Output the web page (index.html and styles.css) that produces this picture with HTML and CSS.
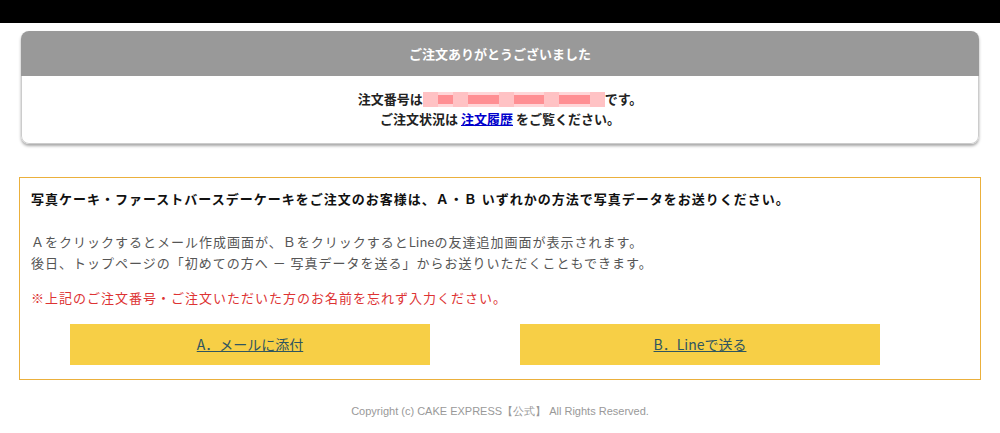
FILE: index.html
```html
<!DOCTYPE html>
<html lang="ja">
<head>
    <meta charset="utf-8">
    <title>ご注文ありがとうございました | CAKE EXPRESS</title>
    <link rel="stylesheet" href="styles.css">
</head>
<body>
    <div class="topbar"></div>

    <div class="container">
        <div class="thanks-card">
            <div class="thanks-head">ご注文ありがとうございました</div>
            <div class="thanks-body">
                <p>注文番号は<span class="masked"><i></i><i class="d"></i><i></i><i class="d"></i><i class="d"></i><i></i><i class="d"></i><i class="d"></i><i></i><i class="d"></i><i class="d"></i><i></i></span>です。</p>
                <p>ご注文状況は <a href="#">注文履歴</a> をご覧ください。</p>
            </div>
        </div>

        <div class="photo-box">
            <p class="photo-title">写真ケーキ・ファーストバースデーケーキをご注文のお客様は、Ａ・Ｂ いずれかの方法で写真データをお送りください。</p>
            <p class="photo-text">Ａをクリックするとメール作成画面が、Ｂをクリックすると<span class="latin">Line</span>の友達追加画面が表示されます。<br>
            後日、トップページの「初めての方へ － 写真データを送る」からお送りいただくこともできます。</p>
            <p class="photo-note">※上記のご注文番号・ご注文いただいた方のお名前を忘れず入力ください。</p>
            <div class="send-buttons">
                <a class="send-btn" href="#">A．メールに添付</a>
                <a class="send-btn" href="#">B．Lineで送る</a>
            </div>
        </div>
    </div>

    <footer class="copyright">Copyright (c) CAKE EXPRESS【公式】 All Rights Reserved.</footer>
</body>
</html>
```

FILE: styles.css
```css
body {
    margin: 0;
    font-family: "Noto Sans CJK JP", "Liberation Sans", sans-serif;
    color: #333;
    background-color: #fff;
}
p {
    margin: 0;
}
.topbar {
    height: 23px;
    background-color: #000;
}
.container {
    width: 960px;
    margin: 0 auto;
    padding-top: 8px;
}
.thanks-card {
    margin: 0 1px;
    border-radius: 8px;
    background-color: #fff;
    box-shadow: 0 2px 3px rgba(0,0,0,0.35);
    overflow: hidden;
}
.thanks-head {
    height: 45px;
    line-height: 45px;
    background-color: #999;
    color: #fff;
    font-size: 13px;
    font-weight: bold;
    text-align: center;
}
.thanks-body {
    padding: 13px 0 14px;
    border: 1px solid #ccc;
    border-top: none;
    border-radius: 0 0 8px 8px;
    text-align: center;
    font-size: 13px;
    font-weight: bold;
    line-height: 20px;
    color: #222;
}
.thanks-body a {
    color: #0000cc;
    text-decoration: underline;
}
.masked {
    display: inline-flex;
    vertical-align: -3px;
    width: 182px;
    height: 15px;
    background-color: #ffd6d8;
}
.masked i {
    flex: 1;
    background-color: #ffc2c4;
}
.masked i.d {
    background-color: #ff8f93;
    margin: 3px 0;
}
.photo-box {
    margin-top: 33px;
    margin-left: -1px;
    margin-right: -1px;
    border: 1px solid #ebb03c;
    padding: 11px 11px 14px;
    font-size: 13px;
    letter-spacing: 1px;
}
.photo-title {
    font-weight: bold;
    color: #111;
    line-height: 20px;
}
.photo-text {
    margin-top: 22px;
    line-height: 21px;
    color: #555;
}
.latin {
    letter-spacing: 0;
}
.photo-note {
    margin-top: 14px;
    line-height: 21px;
    color: #d33;
}
.send-buttons {
    display: flex;
    gap: 90px;
    margin-top: 16px;
    padding-left: 39px;
}
.send-btn {
    display: block;
    width: 360px;
    height: 41px;
    line-height: 41px;
    background-color: #f7cf46;
    color: #2f5560;
    font-size: 14px;
    letter-spacing: 0;
    text-align: center;
    text-decoration: underline;
}
.copyright {
    margin-top: 24px;
    text-align: center;
    font-size: 11px;
    color: #999;
    font-family: "Liberation Sans", sans-serif;
}
```
